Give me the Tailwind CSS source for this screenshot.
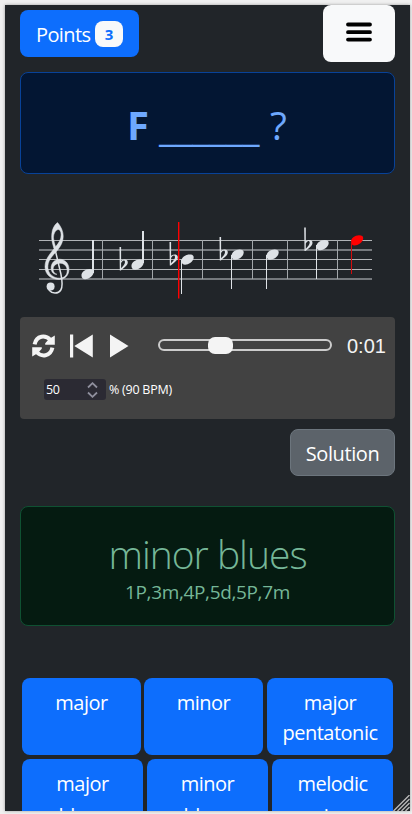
<!DOCTYPE html>
<html lang="en">
<head>
<meta charset="utf-8">
<title>Scale quiz</title>
<script src="https://cdn.jsdelivr.net/npm/@tailwindcss/browser@4"></script>
</head>
<body class="h-[814px] overflow-hidden bg-[#f0f0f0] pl-[5px] pt-[5px] font-['Open_Sans','Noto_Sans',sans-serif]">
<main class="relative h-[806px] w-[405px] overflow-hidden bg-[#212529] px-[15px] shadow-[0_0_3px_#999]">
  <header class="flex h-[57px] items-start justify-between">
    <button class="mt-[5px] flex h-[47px] w-[119px] items-center rounded-lg bg-[#0d6efd] pl-[15px] text-white"><span class="w-[60px] whitespace-nowrap pt-[2px] pl-[1px] text-left text-[20px] tracking-[-0.6px]">Points</span><span class="flex h-[26px] w-7 items-center justify-center rounded-lg bg-[#f8f9fa] pt-[1px] text-[15px] font-bold text-[#0d6efd]">3</span></button>
    <button aria-label="Menu" class="flex h-[57px] w-[72px] justify-center rounded-lg bg-[#f8f9fa] pt-[17px]"><svg width="26" height="21" viewBox="0 0 26 21" fill="none" stroke="#000" stroke-width="3.8" stroke-linecap="round"><path d="M2 2.5h22M2 10.2h22M2 17.6h22"/></svg></button>
  </header>
  <section class="mt-[10px] flex h-[102px] items-center rounded-lg border border-[#084298] bg-[#031633] pl-[106px] pt-[4px] text-[40px] text-[#6ea8fe]">
    <strong class="w-[32px] font-bold">F</strong><span class="w-[100px] whitespace-nowrap pt-[2px] text-[39px] tracking-[-0.4px]">______</span><span class="ml-[11px] w-[17px] text-[39px] font-normal">?</span>
  </section>
  <svg class="block" width="375" height="143" viewBox="20 174 375 143" fill="#dee2e6">
    <path d="M39 240.500h333M39 259.500h333M39 269.500h333" stroke="#b0b3b6" fill="none"/>
    <path d="M39 250h333M39 279h333" stroke="#75797d" stroke-width="2" fill="none"/>
    <path d="M102.5 240v39M152.5 240v39M202.5 240v39M252.5 240v39M287.5 240v39M337.5 240v39" stroke="#a2a6aa" fill="none"/>
    <path fill-rule="evenodd" stroke="#dee2e6" stroke-width=".5" d="M57.4 222.5C60.7 226 63.3 231 63.2 236.500C63.1 243 59.700 247.700 55.500 252.500C50.500 258 47.800 261.500 47.900 267.500C48 273.800 53.400 278.200 59.500 278.200C64.300 278.200 67.400 275 67.200 270.400C67 266.100 64 263.100 60 263.200C55.300 263.300 52.700 266.700 53.200 270.200C53.500 272.300 55 273.900 57 274.300C53.300 274.700 51.100 271.500 51.100 268C51.100 263 54.800 259.200 59.400 259.200C65 259.200 69 263.500 69 269.200C69 275.400 64.800 279.500 59 279.500C51 279.500 45.100 274.500 45 267C44.900 260 48.600 255.500 54 248.800C52.100 242 51.300 239.500 51.800 234C52.200 229 54 225.500 57.400 222.500ZM55.600 246.800C59 242.700 61.200 239.300 61.100 234.800C61 231.500 60 229.600 58.400 229.500C55 229.800 53 235.100 53.600 239Q54.200 243 55.600 246.800Z"/>
    <path d="M54.500 247L60.900 274C62.300 281 63 286.500 60.800 290C58.200 294 52.300 294 49.500 290.500Q47.700 288 47.900 286" stroke="#dee2e6" stroke-width="1.5" fill="none"/>
    <circle cx="50.600" cy="286.500" r="4"/>
    <defs>
      <path id="head" d="M-6 2C-6.400-2-2-5 2-5C5-5 6.400-4 6.200-1.700C5.800 2.500 1 5.200-2.400 5.200C-4.700 5.200-5.800 4-6 2Z"/>
      <path id="flat" fill-rule="evenodd" d="M-.5-17.500H1.100V-3.700C4-6 7.800-5.500 7.800-2.300C7.800 1 4 3.200.8 6H-.2ZM1.100-1.500V3.700C3.400 1.500 5-.2 5-2.400C5-4.900 2.500-4.700 1.100-1.500Z"/>
    </defs>
    <use href="#head" x="87.500" y="274"/><use href="#head" x="137.500" y="264.500"/><use href="#head" x="187.500" y="259.500"/><use href="#head" x="237.500" y="254.500"/><use href="#head" x="272.500" y="254.500"/><use href="#head" x="322.500" y="245"/>
    <use href="#flat" x="120" y="264.500"/><use href="#flat" x="170" y="259.500"/><use href="#flat" x="220" y="254.500"/><use href="#flat" x="304.700" y="245"/>
    <path d="M93 240v33M143 231v32" stroke="#dee2e6" stroke-width="2" fill="none"/>
    <path d="M181.500 260v34M231.500 255v34M266.500 255v34M316.500 245v34" stroke="#dee2e6" fill="none"/>
    <use href="#head" x="357" y="240.300" fill="red"/>
    <path d="M351.500 241v33" stroke="#d00d0e" fill="none"/>
    <path d="M178.700 222v76.500" stroke="red" stroke-width="1.400"/>
  </svg>
  <section class="h-[102px] rounded-[4px] bg-[#424242] px-3 pt-[17px]">
    <div class="flex h-6 items-center text-[#f4f4f4]">
      <svg class="mr-[15px] shrink-0" width="23" height="24" viewBox="0 0 23 24" fill="none" stroke="currentColor" stroke-width="4"><path d="M2.600 10.300C4.500 1.200 13.500.7 18.500 6M20.400 13.700C18.500 22.800 9.500 23.300 4.500 18"/><path d="M22.800 1.500V10.700H13.200V9.200L17 5ZM.2 22.500V13.300H9.800V14.800L6 19Z" fill="currentColor" stroke="none"/></svg>
      <svg class="mr-[17px] shrink-0" width="23" height="24" viewBox="0 0 23 24" fill="currentColor"><path d="M0 .500h3.200v23H0ZM22.800.500v23L4.300 12Z"/></svg>
      <svg class="mr-[29px] shrink-0" width="19" height="24" viewBox="0 0 19 24" fill="currentColor"><path d="M0 .500L18.500 12L0 23.500Z"/></svg>
      <div class="-mt-[2px] flex h-3 w-[174px] shrink-0 items-center rounded-full border-2 border-[#ccc] pl-[48px]"><span class="h-[17px] w-[25px] rounded-[7px] bg-[#f4f4f4]"></span></div>
      <span class="ml-[15px] font-['Liberation_Sans',Arial,sans-serif] text-[20px]">0:01</span>
    </div>
    <div class="ml-3 mt-[21px] flex items-center text-[12.5px] text-white">
      <span class="flex h-[21px] w-[62px] items-center justify-between rounded-[3px] bg-[#2b2a33] pl-[2px] pr-[8px]"><span class="pt-[2px] tracking-[-0.4px]">50</span><svg width="11" height="16" viewBox="0 0 11 16" fill="none" stroke="#8f8f9d" stroke-width="1.800"><path d="M1 5.500L5.500 1.200L10 5.500M1 10.500L5.500 14.800L10 10.500"/></svg></span>
      <span class="ml-[3px] whitespace-nowrap pt-[2px] tracking-[-0.250px]">% (90 BPM)</span>
    </div>
  </section>
  <div class="mt-[10px] flex justify-end"><button class="h-[47px] w-[105px] rounded-lg border border-[#6c757d] bg-[#5c636a] pt-[2px] text-[20px] tracking-[-0.400px] text-white">Solution</button></div>
  <section class="mt-[30px] h-[120px] rounded-lg border border-[#0f5132] bg-[#051b11] pt-[23px] text-center text-[#75b798]">
    <h2 class="h-[47px] whitespace-nowrap text-[39px] font-light leading-[48px] tracking-[-1px]">minor blues</h2>
    <p class="text-[19px] leading-[30px] tracking-[-0.35px]">1P,3m,4P,5d,5P,7m</p>
  </section>
  <div class="mt-[52px] space-y-1 px-[2px] text-[20px] leading-[30px] tracking-[-0.5px] text-white">
    <div class="grid h-[77px] grid-cols-[119px_119px_126px] gap-x-[3px]">
      <button class="flex items-start justify-center rounded-lg bg-[#0d6efd] pt-[10px]">major</button>
      <button class="flex items-start justify-center rounded-lg bg-[#0d6efd] pt-[10px]">minor</button>
      <button class="ml-[1px] -mr-[1px] flex items-start justify-center rounded-lg bg-[#0d6efd] pt-[10px]">major<br>pentatonic</button>
    </div>
    <div class="grid h-[77px] grid-cols-3 gap-1 leading-[32px]">
      <button class="flex items-start justify-center rounded-lg bg-[#0d6efd] pt-[9px]">major<br>blues</button>
      <button class="flex items-start justify-center rounded-lg bg-[#0d6efd] pt-[9px]">minor<br>blues</button>
      <button class="flex items-start justify-center rounded-lg bg-[#0d6efd] pt-[9px]">melodic<br>minor</button>
    </div>
  </div>
  <svg class="absolute bottom-0 right-0" width="17" height="16" viewBox="0 0 17 16" stroke="#bbb" stroke-width="1.300"><path d="M.5 16L16.500 0M4.500 16L16.500 4M8.500 16L16.500 8M12.500 16L16.500 12"/></svg>
</main>
</body>
</html>
